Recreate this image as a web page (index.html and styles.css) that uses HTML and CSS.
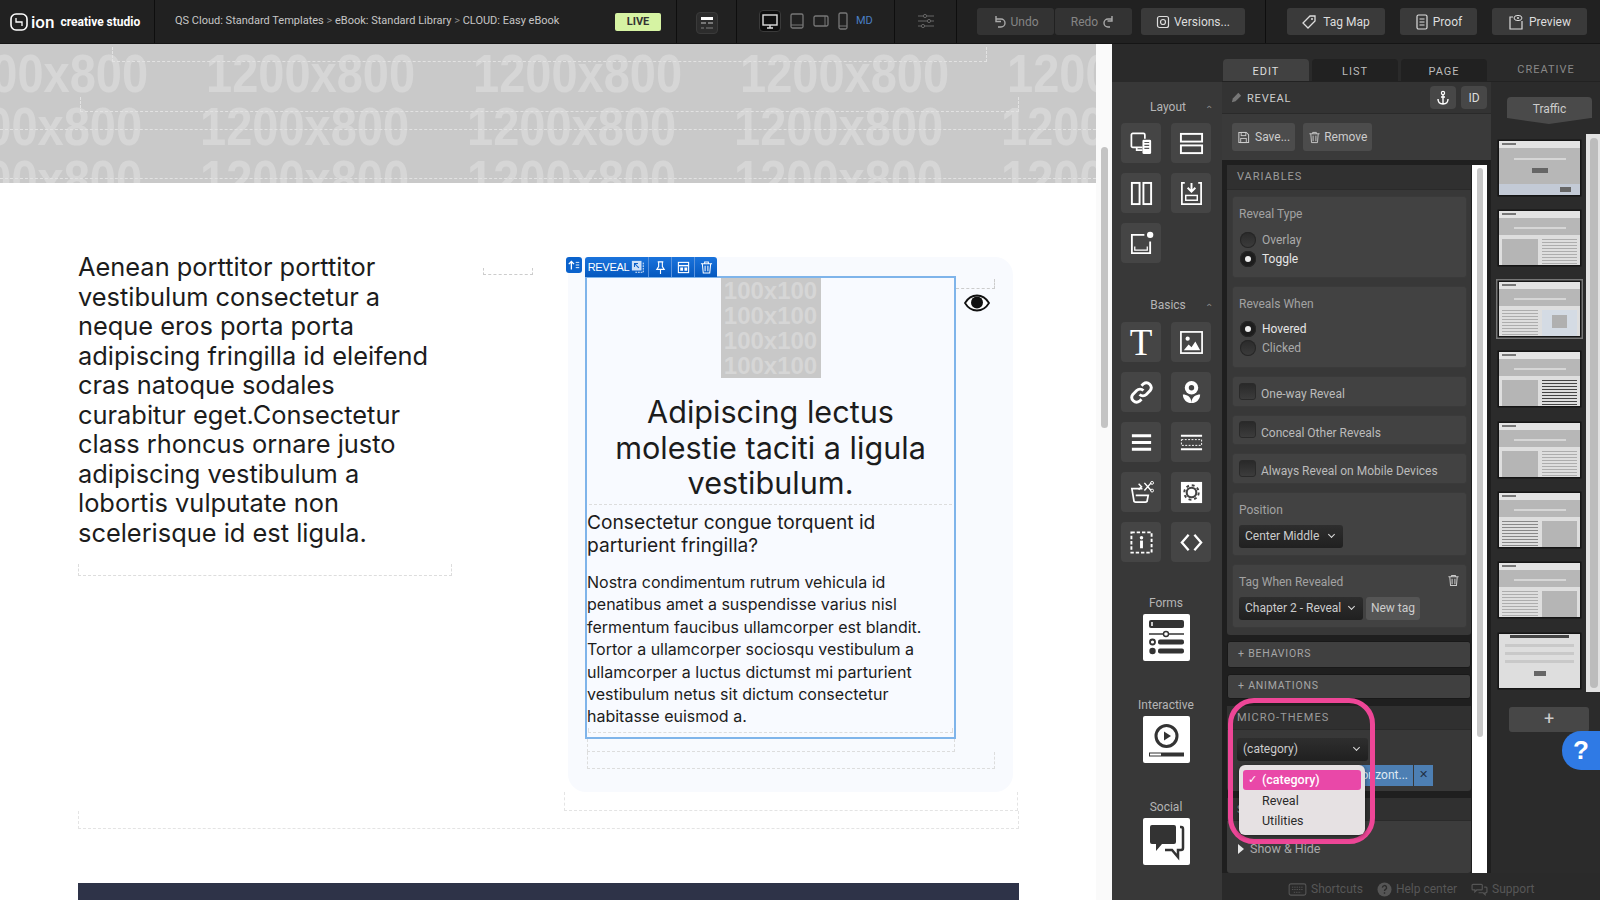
FILE: index.html
```html
<!DOCTYPE html>
<html lang="en">
<head>
  <meta charset="UTF-8">
  <title>ion creative studio</title>
  <link rel="stylesheet" href="styles.css">
</head>
<body>

<!-- top bar -->
<header class="topbar">
  <div class="brand">
    <svg class="brand-mark" viewBox="0 0 18 18"><rect x="1" y="1" width="16" height="16" rx="5" fill="none" stroke="#fff" stroke-width="1.6"/><path d="M6 5v4h3M12 13V9H9" fill="none" stroke="#fff" stroke-width="1.3"/></svg>
    <span class="brand-ion">ion</span>
    <span class="brand-name">creative studio</span>
  </div>
  <div class="crumbs">QS Cloud: Standard Templates <i>&gt;</i> eBook: Standard Library <i>&gt;</i> CLOUD: Easy eBook</div>
  <span class="live">LIVE</span>
  <div class="layout-cell">
    <span class="dev-btn"><svg viewBox="0 0 22 22" width="22" height="22"><rect x="5" y="5" width="12" height="3" fill="#fff"/><rect x="5" y="10" width="5" height="2" fill="#777"/><rect x="12" y="10" width="5" height="2" fill="#777"/><rect x="5" y="15" width="3" height="2" fill="#555"/><rect x="10" y="15" width="7" height="2" fill="#555"/></svg></span>
  </div>
  <div class="devices">
    <span class="dev-btn active"><svg viewBox="0 0 22 22" width="22" height="22"><rect x="4" y="5" width="14" height="10" fill="#111" stroke="#ddd" stroke-width="1.4"/><path d="M11 15v3M8 18h6" stroke="#ddd" stroke-width="1.4"/></svg></span>
    <svg class="dev" viewBox="0 0 16 18" width="16" height="18"><rect x="2" y="2" width="12" height="14" rx="1.5" fill="none" stroke="#777" stroke-width="1.3"/><path d="M2 13h12" stroke="#777"/></svg>
    <svg class="dev" viewBox="0 0 16 18" width="16" height="18"><rect x="1" y="4" width="14" height="10" rx="1.5" fill="none" stroke="#777" stroke-width="1.3"/><path d="M12 4v10" stroke="#777"/></svg>
    <svg class="dev" viewBox="0 0 12 18" width="12" height="18"><rect x="2" y="1" width="8" height="16" rx="1.5" fill="none" stroke="#777" stroke-width="1.3"/><path d="M2 14h8" stroke="#777"/></svg>
    <span class="md">MD</span>
  </div>
  <div class="sliders">
    <svg viewBox="0 0 18 18" width="18" height="18"><path d="M1 4h5M10 4h7M1 9h9M14 9h3M1 14h3M8 14h9" stroke="#666" stroke-width="1.2"/><circle cx="8" cy="4" r="1.6" fill="none" stroke="#666"/><circle cx="12" cy="9" r="1.6" fill="none" stroke="#666"/><circle cx="6" cy="14" r="1.6" fill="none" stroke="#666"/></svg>
  </div>
  <div class="history">
    <div class="btn-group">
      <span class="top-btn dim"><svg viewBox="0 0 14 14" width="14" height="14"><path d="M4 4h5a3.5 3.5 0 0 1 0 8H6M4 1v5.500H9" fill="none" stroke="#aaa" stroke-width="1.4"/></svg>Undo</span>
      <span class="top-btn dim">Redo<svg viewBox="0 0 14 14" width="14" height="14"><path d="M10 4H6a4 4 0 0 0 0 8h2M10 1v5H5.500" fill="none" stroke="#aaa" stroke-width="1.4"/></svg></span>
    </div>
    <span class="top-btn versions"><svg viewBox="0 0 14 14" width="14" height="14"><rect x="1.500" y="1.500" width="11" height="11" rx="2" fill="none" stroke="#ddd" stroke-width="1.2"/><circle cx="7" cy="7" r="2.500" fill="none" stroke="#ddd" stroke-width="1.2"/></svg>Versions...</span>
  </div>
  <div class="actions">
    <span class="top-btn tagmap"><svg viewBox="0 0 14 14" width="14" height="14"><path d="M8 1h5v5l-7 7-5-5z" fill="none" stroke="#ddd" stroke-width="1.3"/><circle cx="10" cy="4" r="1" fill="#ddd"/></svg>Tag Map</span>
    <span class="top-btn proof"><svg viewBox="0 0 14 16" width="14" height="16"><rect x="2" y="1" width="10" height="14" rx="1.500" fill="none" stroke="#ddd" stroke-width="1.2"/><path d="M4.500 5h5M4.500 8h5M4.500 11h5" stroke="#ddd"/></svg>Proof</span>
    <span class="top-btn preview"><svg viewBox="0 0 16 16" width="16" height="16"><path d="M5 3H2v12h12V7" fill="none" stroke="#ddd" stroke-width="1.200"/><ellipse cx="10" cy="4" rx="4" ry="2.600" fill="none" stroke="#ddd"/><circle cx="10" cy="4" r="1" fill="#ddd"/></svg>Preview</span>
  </div>
</header>

<div class="workspace">

  <!-- page being edited -->
  <main class="canvas">
    <div class="page">
      <div class="band">
        <div class="band-row first"><span>1200x800</span><span>1200x800</span><span>1200x800</span><span>1200x800</span><span>1200x800</span></div>
        <div class="band-row"><span>1200x800</span><span>1200x800</span><span>1200x800</span><span>1200x800</span><span>1200x800</span></div>
        <div class="band-row"><span>1200x800</span><span>1200x800</span><span>1200x800</span><span>1200x800</span><span>1200x800</span></div>
        <div class="guide g1"></div>
        <div class="guide g2"></div>
        <div class="guide g3"></div>
        <div class="guide g4"></div>
      </div>

      <div class="page-body">
        <div class="columns">
          <div class="col-left">
            <p class="lead">Aenean porttitor porttitor vestibulum consectetur a neque eros porta porta adipiscing fringilla id eleifend cras natoque sodales curabitur eget.Consectetur class rhoncus ornare justo adipiscing vestibulum a lobortis vulputate non scelerisque id est ligula.</p>
            <div class="dash dash-left"></div>
          </div>
          <div class="dash dash-mini"></div>
          <section class="reveal">
            <span class="up-tab"><svg viewBox="0 0 16 16" width="14" height="14"><path d="M5 13V4M2 7l3-3 3 3" fill="none" stroke="#fff" stroke-width="1.500"/><path d="M10 5h4M10 8h4M10 11h4" stroke="#fff"/></svg></span>
            <div class="reveal-bar">
              <span class="bar-cell name">REVEAL <svg viewBox="0 0 16 16" width="14" height="14"><rect x="1" y="1" width="11" height="11" fill="#cfe0f7"/><path d="M9 9L4 4M4 8V4h4" fill="none" stroke="#0a5fc8" stroke-width="1.200"/><path d="M14 3v11H4" fill="none" stroke="#fff" stroke-dasharray="2 1"/></svg></span>
              <span class="bar-cell"><svg viewBox="0 0 14 14" width="13" height="13"><path d="M4 1h6M5 1v5L3 9h8L9 6V1M7 9v5" fill="none" stroke="#fff" stroke-width="1.200"/></svg></span>
              <span class="bar-cell"><svg viewBox="0 0 14 14" width="13" height="13"><rect x="1.500" y="1.500" width="11" height="11" fill="none" stroke="#fff" stroke-width="1.200"/><path d="M2 5h10" stroke="#fff" stroke-width="1.500"/><rect x="3.500" y="7" width="3" height="3.500" fill="#fff"/><rect x="8" y="7" width="3" height="3.500" fill="#fff"/></svg></span>
              <span class="bar-cell"><svg viewBox="0 0 14 14" width="13" height="13"><path d="M1 3h12M5 3V1h4v2M2.500 3l1 10h7l1-10M5.500 5v6M8.500 5v6" fill="none" stroke="#fff" stroke-width="1.100"/></svg></span>
            </div>
            <div class="guide-corner"></div>
            <svg class="eye" viewBox="0 0 26 18" width="26" height="18"><path d="M1 9c3-5 7-7.500 12-7.500S22 4 25 9c-3 5-7 7.500-12 7.500S4 14 1 9z" fill="#fff" stroke="#111" stroke-width="1.800"/><circle cx="13" cy="8.500" r="6" fill="#111"/></svg>

            <div class="reveal-box">
              <div class="ph">
                <span>100x100</span><span>100x100</span><span>100x100</span><span>100x100</span>
              </div>
              <h2>Adipiscing lectus molestie taciti a ligula vestibulum.</h2>
              <div class="dash dash-head"></div>
              <h3>Consectetur congue torquent id parturient fringilla?</h3>
              <p>Nostra condimentum rutrum vehicula id penatibus amet a suspendisse varius nisl fermentum faucibus ullamcorper est blandit. Tortor a ullamcorper sociosqu vestibulum a ullamcorper a luctus dictumst mi parturient vestibulum netus sit dictum consectetur habitasse euismod a.</p>
              <div class="dash dash-in"></div>
            </div>
            <div class="dash dash-a"></div>
            <div class="dash dash-b"></div>
          </section>
        </div>
        <div class="dash dash-c"></div>
        <div class="dash dash-d"></div>
        <div class="dark-bar"></div>
      </div>
    </div>
    <div class="page-scroll"><div class="page-thumb"></div></div>
  </main>

  <!-- widget palette -->
  <aside class="tools">
    <div class="tools-head"></div>
    <div class="tools-body">
      <div class="tools-title">Layout <small>&#8963;</small></div>
      <div class="tool-grid">
        <span class="tool"><svg viewBox="0 0 26 26"><path d="M14 17H4a1.500 1.500 0 0 1-1.500-1.500V4A1.500 1.500 0 0 1 4 2.500h11A1.500 1.500 0 0 1 16.500 4v4" fill="none" stroke="#fff" stroke-width="1.800"/><path d="M8 17v3h6" fill="none" stroke="#fff" stroke-width="1.800"/><rect x="14" y="9" width="9" height="15" rx="1.500" fill="#fff"/><path d="M16 12h5M16 15h5M16 18h5" stroke="#555" stroke-width="1.200"/></svg></span>
        <span class="tool"><svg viewBox="0 0 26 26"><rect x="2" y="3" width="22" height="8" fill="none" stroke="#fff" stroke-width="2"/><rect x="2" y="15" width="22" height="8" fill="none" stroke="#fff" stroke-width="2"/></svg></span>
        <span class="tool"><svg viewBox="0 0 26 26"><rect x="3" y="2" width="8" height="22" fill="none" stroke="#fff" stroke-width="2"/><rect x="15" y="2" width="8" height="22" fill="none" stroke="#fff" stroke-width="2"/></svg></span>
        <span class="tool"><svg viewBox="0 0 26 26"><path d="M6 2H3v22h20V2h-3" fill="none" stroke="#fff" stroke-width="1.800"/><path d="M13 2v8M9 7l4 4 4-4" fill="none" stroke="#fff" stroke-width="2"/><rect x="7" y="15" width="12" height="5" fill="none" stroke="#fff" stroke-width="1.500"/></svg></span>
        <span class="tool"><svg viewBox="0 0 26 26"><path d="M16 4H3v19h19V11" fill="none" stroke="#fff" stroke-width="1.900"/><path d="M6 16v4h13v-4" fill="none" stroke="#fff" stroke-width="1.300"/><circle cx="22" cy="4" r="3.300" fill="#fff"/></svg></span>
      </div>
      <div class="tools-title basics">Basics <small>&#8963;</small></div>
      <div class="tool-grid">
        <span class="tool tool-t">T</span>
        <span class="tool"><svg viewBox="0 0 26 26"><rect x="2" y="2" width="22" height="22" fill="none" stroke="#fff" stroke-width="1.800"/><circle cx="9" cy="9" r="2.200" fill="#fff"/><path d="M5 21l5-6 3 3 4-6 5 9z" fill="#fff"/></svg></span>
        <span class="tool"><svg viewBox="0 0 26 26"><path d="M11 15a5 5 0 0 0 7 0l4-4a5 5 0 0 0-7-7l-2 2M15 11a5 5 0 0 0-7 0l-4 4a5 5 0 0 0 7 7l2-2" fill="none" stroke="#fff" stroke-width="3"/></svg></span>
        <span class="tool"><svg viewBox="0 0 26 26"><circle cx="13" cy="8" r="7" fill="#fff"/><circle cx="13" cy="8" r="2.800" fill="#444"/><path d="M4 15c4 0 9 2 9 9-5 0-9-4-9-9zM22 15c-4 0-9 2-9 9 5 0 9-4 9-9z" fill="#fff"/></svg></span>
        <span class="tool"><svg viewBox="0 0 26 26"><path d="M3 6h20M3 13h20M3 20h20" stroke="#fff" stroke-width="3.200"/></svg></span>
        <span class="tool"><svg viewBox="0 0 26 26"><path d="M2 6h22M2 20h22" stroke="#fff" stroke-width="2"/><rect x="2.500" y="10" width="21" height="6" fill="none" stroke="#fff" stroke-dasharray="2 1.500"/></svg></span>
        <span class="tool"><svg viewBox="0 0 26 26"><path d="M14 9H3l2 12a2 2 0 0 0 2 2h10a2 2 0 0 0 2-2l1-5H7" fill="none" stroke="#fff" stroke-width="1.800"/><path d="M10 4l3 3-3 3M16 3l7 8M23 3l-7 8" fill="none" stroke="#fff" stroke-width="1.500"/><circle cx="24" cy="3" r="1.500" fill="none" stroke="#fff"/><circle cx="24" cy="11" r="1.500" fill="none" stroke="#fff"/></svg></span>
        <span class="tool"><svg viewBox="0 0 26 26"><rect x="2" y="2" width="22" height="22" fill="#fff"/><circle cx="13" cy="13" r="5" fill="none" stroke="#444" stroke-width="2.200"/><circle cx="13" cy="13" r="7.500" fill="none" stroke="#444" stroke-width="2" stroke-dasharray="3 2.900"/></svg></span>
        <span class="tool"><svg viewBox="0 0 26 26"><rect x="2.500" y="2.500" width="21" height="21" fill="none" stroke="#fff" stroke-width="2" stroke-dasharray="3.500 2"/><circle cx="13" cy="8" r="1.800" fill="#fff"/><path d="M13 11v8" stroke="#fff" stroke-width="3"/></svg></span>
        <span class="tool"><svg viewBox="0 0 26 26"><path d="M10 5l-7 8 7 8M16 5l7 8-7 8" fill="none" stroke="#fff" stroke-width="2.400"/></svg></span>
      </div>
      <div class="tile-group forms">
        <div class="tile-title">Forms</div>
        <span class="tile"><svg viewBox="0 0 47 47"><rect x="6" y="6" width="35" height="8" rx="2" fill="#333"/><path d="M9 8v4" stroke="#fff" stroke-width="1.500"/><path d="M6 20h35" stroke="#333" stroke-width="1.500"/><circle cx="23" cy="20" r="2.500" fill="#fff" stroke="#333" stroke-width="1.400"/><circle cx="9.500" cy="28" r="2.500" fill="none" stroke="#333" stroke-width="1.800"/><rect x="15" y="25.500" width="26" height="5" rx="2" fill="#333"/><circle cx="9.500" cy="37" r="3.200" fill="#333"/><rect x="15" y="34.500" width="26" height="5" rx="2" fill="#333"/></svg></span>
      </div>
      <div class="tile-group">
        <div class="tile-title">Interactive</div>
        <span class="tile"><svg viewBox="0 0 47 47"><circle cx="23.500" cy="20" r="10.500" fill="none" stroke="#333" stroke-width="3"/><path d="M21 15.500l7 4.500-7 4.500z" fill="#333"/><rect x="6.500" y="37" width="34" height="3" fill="#fff" stroke="#333"/><rect x="18" y="37" width="22" height="3" fill="#333"/></svg></span>
      </div>
      <div class="tile-group">
        <div class="tile-title">Social</div>
        <span class="tile"><svg viewBox="0 0 47 47"><path d="M9 7h22a2 2 0 0 1 2 2v15a2 2 0 0 1-2 2H19l-6 7v-7H9a2 2 0 0 1-2-2V9a2 2 0 0 1 2-2z" fill="#333"/><path d="M37 9h1a2 2 0 0 1 2 2v19a2 2 0 0 1-2 2h-3v7l-6-7h-7" fill="none" stroke="#333" stroke-width="2.500"/></svg></span>
      </div>
    </div>
  </aside>

  <!-- properties and pages -->
  <div class="side">
    <div class="tabs">
      <span class="tab current">EDIT</span>
      <span class="tab">LIST</span>
      <span class="tab">PAGE</span>
      <span class="tab-plain">CREATIVE</span>
    </div>
    <div class="side-main">
      <div class="inspector">
        <div class="insp-head">
          <svg viewBox="0 0 14 14" width="13" height="13"><path d="M2 12l1-4 6-6 3 3-6 6z" fill="#777"/></svg>
          <span class="insp-title">REVEAL</span>
          <span class="small-btn"><svg viewBox="0 0 14 16" width="14" height="16"><circle cx="7" cy="3" r="1.600" fill="none" stroke="#fff" stroke-width="1.200"/><path d="M7 5v9M2 9c0 3 2 5 5 5s5-2 5-5M5 7h4" fill="none" stroke="#fff" stroke-width="1.400"/></svg></span>
          <span class="small-btn">ID</span>
        </div>
        <div class="insp-actions">
          <span class="act-btn"><svg viewBox="0 0 14 14" width="13" height="13"><path d="M2 1.500h8l2.500 2.500v8.500h-10.500z" fill="none" stroke="#ccc" stroke-width="1.100"/><rect x="4.500" y="1.500" width="5" height="3.500" fill="none" stroke="#ccc"/><rect x="4" y="8" width="6" height="4.500" fill="none" stroke="#ccc"/></svg>Save...</span>
          <span class="act-btn"><svg viewBox="0 0 14 14" width="13" height="13"><path d="M1.500 3h11M5 3V1.500h4V3M3 3l.8 9.500h6.400L11 3M5.500 5v6M8.500 5v6" fill="none" stroke="#ccc" stroke-width="1"/></svg>Remove</span>
        </div>
        <div class="scroller">
          <div class="panels">
            <section class="panel">
              <div class="panel-head">VARIABLES</div>
              <div class="panel-body">
                <div class="box h82">
                  <div class="box-label">Reveal Type</div>
                  <div class="opt"><i class="radio"></i>Overlay</div>
                  <div class="opt on"><i class="radio"></i>Toggle</div>
                </div>
                <div class="box h82">
                  <div class="box-label">Reveals When</div>
                  <div class="opt on"><i class="radio"></i>Hovered</div>
                  <div class="opt"><i class="radio"></i>Clicked</div>
                </div>
                <div class="box check-box"><i class="check"></i>One-way Reveal</div>
                <div class="box check-box"><i class="check"></i>Conceal Other Reveals</div>
                <div class="box check-box"><i class="check"></i>Always Reveal on Mobile Devices</div>
                <div class="box h64">
                  <div class="box-label">Position</div>
                  <span class="select w104">Center Middle</span>
                </div>
                <div class="box h64">
                  <div class="box-label spread">Tag When Revealed
                    <svg viewBox="0 0 14 14" width="13" height="13"><path d="M1.500 3h11M5 3V1.500h4V3M3 3l.8 9.500h6.400L11 3M5.500 5v6M8.500 5v6" fill="none" stroke="#ccc" stroke-width="1.100"/></svg>
                  </div>
                  <div class="tag-row">
                    <span class="select w124">Chapter 2 - Reveal</span>
                    <span class="new-tag">New tag</span>
                  </div>
                </div>
              </div>
            </section>
            <div class="fold h27">+ BEHAVIORS</div>
            <div class="fold h25">+ ANIMATIONS</div>
            <section class="panel micro">
              <div class="panel-head">MICRO-THEMES</div>
              <span class="select wide">(category)</span>
              <div class="micro-tag"><span class="chip">Horizont...</span><span class="chip-x">&#10005;</span></div>
              <div class="ring"></div>
              <ul class="menu">
                <li class="picked">(category)</li>
                <li>Reveal</li>
                <li>Utilities</li>
              </ul>
            </section>
            <section class="panel last">
              <div class="panel-head">SETTINGS</div>
              <div class="show-hide"><i></i>Show &amp; Hide</div>
            </section>
          </div>
          <div class="panel-track"><div class="panel-thumb"></div></div>
        </div>
      </div>

      <div class="pages">
        <div class="traffic">Traffic</div>
        <div class="thumbs">
          <div class="thumb"><div class="t-head"></div><div class="t-hero"><b class="t-line"></b><b class="t-btn"></b></div><div class="t-foot"><b class="t-btn"></b></div></div>
          <div class="thumb"><div class="t-head"></div><div class="t-band"><b class="t-line"></b></div><div class="t-row"><b class="t-img"></b><b class="t-text"></b></div></div>
          <div class="thumb picked-thumb"><div class="t-head"></div><div class="t-band"><b class="t-line"></b></div><div class="t-row"><b class="t-text"></b><b class="t-card"><i></i></b></div></div>
          <div class="thumb"><div class="t-head"></div><div class="t-band"><b class="t-line"></b></div><div class="t-row"><b class="t-img"></b><b class="t-text bold"></b></div></div>
          <div class="thumb"><div class="t-head"></div><div class="t-band"><b class="t-line"></b></div><div class="t-row"><b class="t-img"></b><b class="t-text"></b></div></div>
          <div class="thumb"><div class="t-head"></div><div class="t-band"><b class="t-line"></b></div><div class="t-row"><b class="t-text dark"></b><b class="t-img"></b></div></div>
          <div class="thumb"><div class="t-head"></div><div class="t-band"><b class="t-line"></b></div><div class="t-row"><b class="t-text"></b><b class="t-img"></b></div></div>
          <div class="thumb t-form"><b class="t-title"></b><b class="t-field"></b><b class="t-field"></b><b class="t-field"></b><b class="t-btn"></b></div>
        </div>
        <div class="add-page">+</div>
        <div class="pages-track"><div class="pages-thumb"></div></div>
        <div class="help">?</div>
      </div>
    </div>
    <footer class="foot">
      <span><svg viewBox="0 0 20 14" width="19" height="13"><rect x="1" y="1" width="18" height="12" rx="2" fill="none" stroke="#555" stroke-width="1.200"/><path d="M4 4.500h12M4 7h12M6 10h8" stroke="#555" stroke-dasharray="1.500 1"/></svg>Shortcuts</span>
      <span><svg viewBox="0 0 16 16" width="15" height="15"><circle cx="8" cy="8" r="7.500" fill="#555"/><path d="M5.800 6a2.200 2.200 0 1 1 3.300 1.900c-.8.500-1.100.9-1.100 1.600M8 11v1.600" fill="none" stroke="#2a2a2a" stroke-width="1.500"/></svg>Help center</span>
      <span><svg viewBox="0 0 18 14" width="17" height="13"><path d="M2 1.500h9a1 1 0 0 1 1 1v4a1 1 0 0 1-1 1H6l-2 2v-2H2a1 1 0 0 1-1-1v-4a1 1 0 0 1 1-1z" fill="none" stroke="#555" stroke-width="1.300"/><path d="M14 4.500h2a1 1 0 0 1 1 1v4a1 1 0 0 1-1 1h-1v2l-2-2H8" fill="none" stroke="#555" stroke-width="1.300"/></svg>Support</span>
    </footer>
  </div>
</div>

</body>
</html>
```

FILE: styles.css
```css
* {
  box-sizing: border-box;
}

html, body {
  height: 100%;
}

body {
  margin: 0;
  overflow: hidden;
  font-family: Roboto, "Liberation Sans", sans-serif;
  background: #2a2a2a;
}

/* top bar */
.topbar {
  height: 44px;
  display: flex;
  background: #212121;
  color: #ccc;
  font-size: 12px;
  border-bottom: 1px solid #151515;
}

.brand {
  width: 155px;
  display: flex;
  align-items: center;
  padding-left: 10px;
  border-right: 1px solid #0e0e0e;
  color: #fff;
}

.brand-mark {
  width: 18px;
  height: 18px;
  margin-right: 3px;
}

.brand-ion {
  font-size: 17px;
  font-weight: 500;
  margin-right: 6px;
}

.brand-name {
  font-weight: 700;
  font-size: 12px;
}

.crumbs {
  width: 460px;
  padding-left: 20px;
  font-size: 11px;
  line-height: 42px;
  white-space: nowrap;
  color: #c6c6c6;
}

.crumbs i {
  font-style: normal;
  color: #888;
}

.live {
  width: 46px;
  height: 18px;
  margin: 13px 15px 0 0;
  background: #d6f3a3;
  color: #333;
  font-weight: 700;
  font-size: 11px;
  line-height: 17px;
  text-align: center;
  border-radius: 2px;
}

.layout-cell {
  width: 61px;
  display: flex;
  align-items: flex-start;
  padding: 12px 0 0 19px;
  border-left: 1px solid #0e0e0e;
  border-right: 1px solid #0e0e0e;
}

.dev-btn {
  width: 22px;
  height: 22px;
  display: block;
  background: #2c2c2c;
  border: 1px solid #3a3a3a;
  border-radius: 4px;
  overflow: hidden;
}

.dev-btn svg {
  display: block;
  margin: -1px;
}

.dev-btn.active {
  background: #0e0e0e;
}

.devices {
  width: 157px;
  display: flex;
  align-items: center;
  padding: 0 0 2px 22px;
  gap: 7px;
}

.devices .dev {
  margin-left: 1px;
  margin-right: 0;
}

.md {
  font-size: 11px;
  color: #4a7fc4;
  margin-left: 0;
}

.sliders {
  width: 63px;
  display: flex;
  align-items: center;
  justify-content: center;
  padding-bottom: 2px;
  border-left: 1px solid #0e0e0e;
  border-right: 1px solid #0e0e0e;
}

.history {
  width: 309px;
  display: flex;
  gap: 9px;
  padding: 8px 0 0 20px;
  border-right: 1px solid #0e0e0e;
}

.btn-group {
  display: flex;
  gap: 1px;
}

.top-btn {
  height: 27px;
  display: flex;
  align-items: center;
  justify-content: center;
  gap: 4px;
  background: #3a3a3a;
  border-radius: 3px;
  color: #ddd;
  font-size: 12px;
}

.top-btn.dim {
  width: 77px;
  color: #858585;
  background: #333;
}

.versions {
  width: 104px;
}

.actions {
  flex: 1;
  display: flex;
  padding: 8px 0 0 21px;
  gap: 15px;
}

.tagmap {
  width: 98px;
  gap: 7px;
}

.proof {
  width: 77px;
}

.preview {
  width: 95px;
  gap: 5px;
}

/* main area */
.workspace {
  height: 856px;
  display: flex;
}

.canvas {
  width: 1112px;
  display: flex;
  background: #fff;
}

.page {
  width: 1096px;
  overflow: hidden;
  background: #fff;
}

.page-scroll {
  width: 16px;
  background: #fafafa;
  padding: 103px 4px 0 5px;
}

.page-thumb {
  height: 281px;
  background: #c4c4c4;
  border-radius: 4px;
}

.band {
  position: relative;
  height: 139px;
  overflow: hidden;
  background: #c9c9c9;
  padding-top: 0;
}

.band-row {
  height: 53px;
  display: flex;
  margin-left: -67px;
  white-space: nowrap;
  font-family: "Liberation Sans", sans-serif;
  font-weight: 700;
  font-size: 54px;
  line-height: 53px;
  color: #d6d6d6;
}

.band-row.first {
  margin-left: -61px;
  margin-top: 3px;
}

.band-row span {
  width: 267px;
  flex: none;
  transform: scaleX(.87);
  transform-origin: left center;
}

.guide {
  position: absolute;
  border-bottom: 1px dashed #e2e2e2;
}

.g1 {
  left: 112px;
  top: 3px;
  width: 875px;
  height: 15px;
  border-left: 1px dashed #e2e2e2;
  border-right: 1px dashed #e2e2e2;
}

.g2 {
  left: 80px;
  top: 53px;
  width: 939px;
  height: 15px;
  border-left: 1px dashed #e2e2e2;
  border-right: 1px dashed #e2e2e2;
}

.g3 {
  left: 0;
  top: 85px;
  width: 1096px;
}

.g4 {
  left: 0;
  top: 134px;
  width: 1096px;
}

.page-body {
  padding: 69px 0 0 78px;
  color: #1c1c1c;
  font-family: Inter, "Liberation Sans", sans-serif;
}

.columns {
  display: flex;
  align-items: flex-start;
}

.col-left {
  width: 374px;
}

.lead {
  margin: 0;
  padding-right: 16px;
  font-size: 25.4px;
  line-height: 29.5px;
}

.dash {
  border: 1px dashed #ddd;
  border-top: none;
}

.dash-left {
  height: 12px;
  margin-top: 17px;
}

.dash-mini {
  width: 50px;
  height: 7px;
  margin: 16px 35px 0 31px;
  border-color: #ccc;
}

.reveal {
  position: relative;
  width: 445px;
  height: 535px;
  margin-top: 5px;
  padding: 19px 0 0 17px;
  background: #f8fafe;
  border-radius: 18px;
}

.up-tab {
  position: absolute;
  left: -2px;
  top: 0;
  width: 16px;
  height: 16px;
  background: #0a62cc;
  border-radius: 3px;
  display: flex;
  align-items: center;
  justify-content: center;
}

.reveal-bar {
  position: absolute;
  left: 17px;
  top: 0;
  height: 20px;
  display: flex;
  background: linear-gradient(#1a73dc, #0558bf);
  border-radius: 3px 3px 0 0;
  color: #fff;
}

.bar-cell {
  width: 23px;
  display: flex;
  align-items: center;
  justify-content: center;
  border-left: 1px solid #5b93dc;
}

.bar-cell.name {
  width: 63px;
  gap: 2px;
  border-left: none;
  font-family: "Liberation Sans", sans-serif;
  font-size: 11px;
  letter-spacing: -.3px;
}

.guide-corner {
  position: absolute;
  left: 388px;
  top: 22px;
  width: 39px;
  height: 10px;
  border-right: 1px dashed #ccc;
  border-bottom: 1px dashed #ccc;
}

.eye {
  position: absolute;
  left: 396px;
  top: 37px;
}

.reveal-box {
  width: 371px;
  height: 463px;
  border: 2px solid #7fb4ea;
  background: #f8faff;
}

.ph {
  width: 100px;
  height: 100px;
  margin: 0 auto;
  overflow: hidden;
  background: #c8c8c8;
  color: #d6d6d6;
  font-weight: 700;
  font-family: "Liberation Sans", sans-serif;
  font-size: 24px;
  line-height: 25px;
  text-align: center;
}

.ph span {
  display: block;
}

.reveal-box h2 {
  margin: 16px 0 0;
  padding: 0 20px;
  font-size: 30.6px;
  line-height: 35.7px;
  font-weight: 400;
  text-align: center;
}

.dash-head {
  height: 4px;
  border-left: none;
  border-right: none;
  margin: 0 2px;
}

.reveal-box h3 {
  margin: 6px 0 0;
  font-size: 19.2px;
  line-height: 22.4px;
  font-weight: 400;
}

.reveal-box p {
  margin: 15px 0 0;
  font-size: 16px;
  line-height: 22.4px;
}

.dash-in {
  height: 5px;
  margin: 0 1px;
}

.dash-a {
  width: 368px;
  height: 13px;
  margin-left: 2px;
}

.dash-b {
  width: 408px;
  height: 17px;
  margin-left: 2px;
}

.dash-c {
  width: 454px;
  height: 19px;
  margin-left: 486px;
  border-color: #e4e4e4;
}

.dash-d {
  width: 941px;
  height: 18px;
  border-color: #e4e4e4;
}

.dark-bar {
  width: 941px;
  height: 40px;
  margin-top: 54px;
  background: #2e3348;
}

/* widget palette */
.tools {
  width: 110px;
  display: flex;
  flex-direction: column;
}

.tools-head {
  height: 38px;
  background: #2a2a2a;
}

.tools-body {
  flex: 1;
  background: #383838;
  padding: 18px 9px 0;
  color: #b5b5b5;
}

.tools-title {
  position: relative;
  height: 23px;
  text-align: center;
  font-size: 12px;
  line-height: 15px;
  padding-right: 4px;
  margin-left: 6px;
}

.tools-title small {
  position: absolute;
  right: 0;
  top: 2px;
  font-size: 10px;
  color: #888;
}

.tools-title.basics {
  margin-top: 35px;
  height: 24px;
}

.tool-grid {
  display: grid;
  grid-template-columns: 40px 40px;
  gap: 10px;
}

.tool {
  width: 40px;
  height: 40px;
  background: #454545;
  border-radius: 4px;
  display: flex;
  align-items: center;
  justify-content: center;
}

.tool svg {
  width: 25px;
  height: 25px;
}

.tool-t {
  font-family: "Liberation Serif", serif;
  font-size: 37px;
  color: #fff;
}

.tile-group {
  display: flex;
  flex-direction: column;
  align-items: center;
  margin-top: 37px;
  padding-right: 2px;
}

.tile-group.forms {
  margin-top: 34px;
}

.tile-title {
  font-size: 12px;
  line-height: 15px;
  margin-bottom: 3px;
}

.tile {
  width: 47px;
  height: 47px;
  background: #fff;
  border-radius: 2px;
  display: block;
}

.tile svg {
  display: block;
}

/* right column */
.side {
  width: 378px;
  display: flex;
  flex-direction: column;
  background: #2a2a2a;
}

.tabs {
  height: 38px;
  display: flex;
  align-items: flex-end;
  gap: 3px;
  padding-left: 1px;
  color: #bbb;
  font-size: 11px;
  letter-spacing: 1px;
  border-bottom: 1px solid #222;
}

.tab {
  width: 86px;
  height: 22px;
  background: #212121;
  border-radius: 4px 4px 0 0;
  text-align: center;
  line-height: 25px;
}

.tab.current {
  background: #414141;
  color: #ddd;
}

.tab-plain {
  width: 88px;
  height: 23px;
  color: #888;
  text-align: center;
  line-height: 24px;
  margin-left: 12px;
}

.side-main {
  flex: 1;
  min-height: 0;
  display: flex;
}

.inspector {
  width: 269px;
  display: flex;
  flex-direction: column;
  background: #1f1f1f;
}

.insp-head {
  height: 32px;
  flex: none;
  display: flex;
  align-items: center;
  gap: 3px;
  padding: 0 4px 0 8px;
  background: #333;
  border-bottom: 1px solid #2a2a2a;
}

.insp-title {
  flex: 1;
  color: #ccc;
  font-size: 11px;
  letter-spacing: .8px;
  margin-left: 1px;
  padding-top: 2px;
}

.small-btn {
  width: 26px;
  height: 23px;
  margin-left: 2px;
  display: flex;
  align-items: center;
  justify-content: center;
  background: #474747;
  color: #ddd;
  font-size: 12px;
  border-radius: 4px;
}

.insp-actions {
  height: 46px;
  flex: none;
  display: flex;
  gap: 8px;
  padding: 9px 0 0 10px;
  background: #3a3a3a;
}

.act-btn {
  height: 28px;
  display: flex;
  align-items: center;
  gap: 5px;
  padding: 0 5px;
  background: #4c4c4c;
  color: #ccc;
  font-size: 12px;
  border-radius: 3px;
}

.act-btn + .act-btn {
  gap: 3px;
}

.scroller {
  flex: 1;
  min-height: 0;
  display: flex;
  padding: 5px 4px 0 5px;
  overflow: hidden;
}

.panels {
  width: 244px;
  flex: none;
  display: flex;
  flex-direction: column;
}

.panel {
  position: relative;
  background: #383838;
  border-radius: 3px;
}

.panel-head {
  height: 25px;
  padding-left: 10px;
  background: #303030;
  border-bottom: 1px solid #2a2a2a;
  color: #9b9b9b;
  font-size: 11px;
  letter-spacing: 1px;
  line-height: 24px;
}

.panel-body {
  padding: 6px 4px 7px 5px;
  display: flex;
  flex-direction: column;
  gap: 8px;
}

.box {
  background: #424242;
  border: 1px solid #3a3a3a;
  border-radius: 3px;
  padding: 0 6px;
  color: #bbb;
  font-size: 12px;
}

.h82 {
  height: 82px;
  padding-top: 9px;
}

.h82 + .h82 .box-label {
  margin-bottom: 7px;
}

.h64 {
  height: 64px;
  padding-top: 9px;
}

.box-label {
  height: 16px;
  line-height: 16px;
  color: #a2a2a2;
  margin-bottom: 8px;
}

.h64 .box-label {
  margin-bottom: 7px;
}

.spread {
  display: flex;
  justify-content: space-between;
}

.opt {
  height: 19px;
  display: flex;
  align-items: center;
  gap: 6px;
  padding-left: 1px;
  color: #aaa;
}

.opt.on {
  color: #e6e6e6;
}

.radio {
  width: 16px;
  height: 16px;
  border-radius: 50%;
  background: linear-gradient(#2a2a2a, #3c3c3c);
  box-shadow: inset 0 0 0 1px #262626;
  position: relative;
}

.on .radio::after {
  content: "";
  position: absolute;
  left: 5px;
  top: 5px;
  width: 6px;
  height: 6px;
  border-radius: 50%;
  background: #eee;
}

.on .radio {
  background: #1d1d1d;
}

.check-box {
  height: 31px;
  display: flex;
  align-items: center;
  gap: 5px;
  padding-top: 5px;
}

.check-box:nth-child(4) {
  height: 30px;
}

.check {
  width: 17px;
  height: 17px;
  margin-top: -6px;
  background: linear-gradient(#292929, #3c3c3c);
  border: 1px solid #2a2a2a;
  border-radius: 3px;
}

.select {
  position: relative;
  display: block;
  height: 23px;
  padding-left: 6px;
  background: linear-gradient(#2e2e2e, #202020);
  border-radius: 3px;
  color: #ccc;
  font-size: 12px;
  line-height: 22px;
}

.h64 > .select {
  margin-top: 1px;
}

.select::after {
  content: "";
  position: absolute;
  right: 9px;
  top: 7px;
  width: 4px;
  height: 4px;
  border-right: 1.500px solid #ddd;
  border-bottom: 1.500px solid #ddd;
  transform: rotate(45deg);
}

.w104 {
  width: 104px;
}

.w124 {
  width: 124px;
  flex: none;
}

.wide {
  width: 131px;
  margin: 8px 0 0 10px;
}

.tag-row {
  display: flex;
  gap: 3px;
}

.new-tag {
  width: 54px;
  height: 23px;
  background: #555;
  border-radius: 3px;
  color: #ccc;
  text-align: center;
  line-height: 22px;
}

.fold {
  margin-top: 6px;
  padding-left: 10px;
  background: #404040;
  border: 1px solid #191919;
  border-radius: 3px;
  color: #a6a6a6;
  font-size: 10.5px;
  letter-spacing: .8px;
}

.h27 {
  height: 27px;
  line-height: 24px;
}

.h25 {
  height: 25px;
  line-height: 22px;
}

.micro {
  height: 85px;
  margin-top: 7px;
  z-index: 2;
}

.micro .panel-head {
  height: 24px;
}

.micro-tag {
  display: flex;
  gap: 1px;
  margin: 4px 0 0 122px;
}

.chip {
  width: 64px;
  height: 21px;
  background: #4d7fb3;
  color: #dfe9f3;
  font-size: 12px;
  line-height: 20px;
  text-align: right;
  padding-right: 5px;
  white-space: nowrap;
}

.chip-x {
  width: 19px;
  height: 21px;
  background: #4d7fb3;
  color: #1f2f44;
  font-size: 11px;
  line-height: 20px;
  text-align: center;
}

.ring {
  position: absolute;
  left: 1px;
  top: -8px;
  width: 147px;
  height: 146px;
  border: 5px solid #ee4697;
  border-radius: 26px;
}

.menu {
  position: absolute;
  left: 12px;
  top: 59px;
  width: 126px;
  height: 70px;
  margin: 0;
  padding: 5px 4px;
  list-style: none;
  background: #e6e1e3;
  border-radius: 6px;
  box-shadow: 0 1px 4px rgba(0, 0, 0, .5);
  color: #2a2a2a;
  font-size: 12.500px;
}

.menu li {
  height: 20px;
  padding-left: 19px;
  line-height: 19px;
  margin-bottom: .5px;
}

.menu .picked {
  position: relative;
  background: #e948a8;
  border-radius: 3px;
  color: #fff;
  font-weight: 500;
}

.menu .picked::before {
  content: "\2713";
  position: absolute;
  left: 5px;
  font-family: "DejaVu Sans", sans-serif;
  font-size: 11px;
}

.last {
  flex: 1;
  margin-top: 7px;
  background: #3c3c3c;
}

.last .panel-head {
  height: 23px;
}

.show-hide {
  display: flex;
  align-items: center;
  gap: 6px;
  margin: 20px 0 0 11px;
  color: #aaa;
  font-size: 12.500px;
}

.show-hide i {
  width: 0;
  height: 0;
  border-left: 6px solid #e6e6e6;
  border-top: 5px solid transparent;
  border-bottom: 5px solid transparent;
}

.panel-track {
  width: 15px;
  margin: 0 0 0 1px;
  padding: 3px 4px 0 5px;
  background: #fff;
}

.panel-thumb {
  height: 569px;
  background: #c8c8c8;
  border-radius: 3px;
}

/* page thumbnails */
.pages {
  position: relative;
  width: 109px;
  padding-left: 8px;
  background: #2b2b2b;
}

.traffic {
  position: relative;
  width: 85px;
  height: 21px;
  margin: 15px 0 0 8px;
  background: #4a4a4a;
  border-radius: 4px 4px 0 0;
  color: #ccc;
  font-size: 12px;
  text-align: center;
  line-height: 24px;
}

.traffic::after {
  content: "";
  position: absolute;
  left: 0;
  top: 21px;
  border-top: 6px solid #4a4a4a;
  border-left: 42.500px solid transparent;
  border-right: 42.500px solid transparent;
}

.thumbs {
  margin-top: 23px;
  display: flex;
  flex-direction: column;
  gap: 16.400px;
}

.thumb {
  width: 81px;
  height: 54px;
  display: flex;
  flex-direction: column;
  overflow: hidden;
  background: #dedede;
  box-shadow: 0 0 0 1.500px #151515;
}

.picked-thumb {
  box-shadow: 0 0 0 1.500px #151515, 0 0 0 3px #777;
}

.t-head {
  height: 7px;
  flex: none;
  background: #e3e3e3;
  padding: 2px 3px;
}

.t-head::before {
  content: "";
  display: block;
  width: 14px;
  height: 2px;
  background: #777;
}

.t-hero {
  flex: 1;
  background: #b7b7b7;
  padding-top: 10px;
  text-align: center;
}

.t-band {
  height: 17px;
  flex: none;
  background: #b7b7b7;
  padding-top: 9px;
}

.t-line {
  display: block;
  width: 52px;
  height: 2px;
  margin: 0 auto;
  background: #d6d6d6;
}

.t-btn {
  display: block;
  width: 16px;
  height: 5px;
  margin: 8px auto 0;
  background: #666;
}

.t-foot {
  height: 11px;
  flex: none;
  padding-right: 9px;
  background: #c3cad6;
}

.t-foot .t-btn {
  margin: 3px 0 0 auto;
  width: 11px;
}

.t-row {
  flex: 1;
  display: flex;
  gap: 4px;
  padding: 4px 3px 0;
}

.t-img {
  flex: 1;
  background: #b5b5b5;
}

.t-text {
  flex: 1;
  background: repeating-linear-gradient(#adadad 0 1px, transparent 1px 3px);
}

.t-text.bold {
  background: repeating-linear-gradient(#444 0 1px, transparent 1px 3px);
}

.t-text.dark {
  background: repeating-linear-gradient(#888 0 1px, transparent 1px 3px);
}

.t-card {
  flex: 1;
  background: #d4dbe4;
  padding-top: 5px;
}

.t-card i {
  display: block;
  width: 15px;
  height: 13px;
  margin: 0 auto;
  background: #b0b0b0;
}

.t-form {
  padding: 1px 6px;
}

.t-title {
  display: block;
  height: 3px;
  margin: 0 5px 6px;
  background: #444;
}

.t-field {
  display: block;
  height: 3px;
  margin-bottom: 5px;
  background: #c9c9c9;
}

.t-form .t-btn {
  margin-top: 3px;
  width: 12px;
}

.add-page {
  width: 80px;
  height: 25px;
  margin: 19px 0 0 10px;
  background: #474747;
  border-radius: 3px;
  color: #ccc;
  font-size: 18px;
  text-align: center;
  line-height: 24px;
}

.pages-track {
  position: absolute;
  right: 0;
  top: 52px;
  width: 14px;
  height: 558px;
  background: #e2e2e2;
  padding: 4px 2px 4px 4px;
}

.pages-thumb {
  height: 100%;
  background: #bcbcbc;
  border-radius: 4px;
}

.help {
  position: absolute;
  right: 0;
  top: 649px;
  width: 38px;
  height: 39px;
  background: #2f7ae5;
  border-radius: 19px 0 0 19px;
  color: #fff;
  font-weight: 700;
  font-size: 26px;
  line-height: 38px;
  text-align: center;
  font-family: "Liberation Sans", sans-serif;
}

.foot {
  height: 27px;
  flex: none;
  display: flex;
  align-items: center;
  padding: 5px 0 0 66px;
  gap: 14px;
  background: #2a2a2a;
  color: #575757;
  font-size: 12px;
}

.foot span {
  display: flex;
  align-items: center;
  gap: 4px;
}
```
